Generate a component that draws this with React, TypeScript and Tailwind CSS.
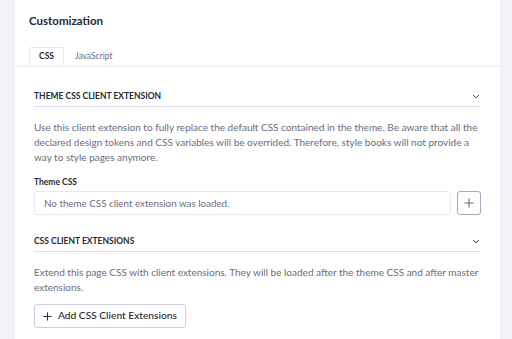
import React from "react";

const font = { fontFamily: "Lato, 'Noto Sans', sans-serif" };

const Chevron = () => (
    <svg width="8" height="5" viewBox="0 0 8 5" fill="none" className="mr-[1px]">
        <polyline points="1,1 4,3.8 7,1" stroke="#393a4a" strokeWidth="0.9" />
    </svg>
);

const Plus: React.FC<{ size: number; color: string }> = ({ size, color }) => (
    <svg width={size} height={size} viewBox="0 0 10 10" fill="none">
        <path d="M5 0.5v9M0.5 5h9" stroke={color} strokeWidth="1.1" />
    </svg>
);

const SectionHeader: React.FC<{ title: string; className?: string }> = ({ title, className }) => (
    <div className={`flex items-center justify-between border-b border-[#dedfe5] pb-[4px] ${className ?? ""}`}>
        <span className="text-[8.5px] font-bold leading-[12px] text-[#272833]">{title}</span>
        <Chevron />
    </div>
);

export default function App() {
    return (
        <div className="w-[512px] h-[339px] bg-[#f1f2f5] flex pl-[15px] pr-[12px] overflow-hidden" style={font}>
            <div className="flex-1 bg-white flex flex-col">
                <div className="px-[14px] pt-[14px] text-[11.5px] font-bold leading-[14px] text-[#272833]">
                    Customization
                </div>
                <div className="mt-[19px] flex px-[14px] border-b-2 border-[#f1f2f5]">
                    <div className="h-[18px] w-[35px] flex items-center justify-center border border-b-0 border-[#e7e7ed] rounded-t-[3px] text-[8.5px] font-bold text-[#272833] -mb-[2px] bg-white">
                        CSS
                    </div>
                    <div className="h-[18px] ml-[11px] flex items-center text-[8.5px] text-[#6b6c7e]">
                        JavaScript
                    </div>
                </div>
                <div className="px-[19px] flex flex-col">
                    <SectionHeader title="THEME CSS CLIENT EXTENSION" className="mt-[23px]" />
                    <p className="mt-[13px] text-[10px] leading-[15px] text-[#6b6c7e]">
                        Use this client extension to fully replace the default CSS contained in the theme. Be aware that all the declared design tokens and CSS variables will be overrided. Therefore, style books will not provide a way to style pages anymore.
                    </p>
                    <div className="mt-[11px] text-[8.5px] font-bold leading-[12px] text-[#272833]">Theme CSS</div>
                    <div className="mt-[3px] flex gap-[6px]">
                        <div className="flex-1 h-[24px] border border-[#e7e7ed] rounded-[3px] flex items-center pl-[9px] text-[9.8px] text-[#6b6c7e]">
                            No theme CSS client extension was loaded.
                        </div>
                        <button className="w-[24px] h-[24px] border border-[#a7a9bc] rounded-[3px] flex items-center justify-center">
                            <Plus size={10} color="#6b6c7e" />
                        </button>
                    </div>
                    <SectionHeader title="CSS CLIENT EXTENSIONS" className="mt-[20px]" />
                    <p className="mt-[13px] text-[10px] leading-[15px] text-[#6b6c7e]">
                        Extend this page CSS with client extensions. They will be loaded after the theme CSS and after master extensions.
                    </p>
                    <div className="mt-[9px] flex">
                        <button className="h-[24px] px-[8px] border border-[#cdced9] rounded-[3px] flex items-center gap-[6px] whitespace-nowrap text-[10.2px] text-[#272833] font-medium">
                            <Plus size={9} color="#272833" />
                            Add CSS Client Extensions
                        </button>
                    </div>
                </div>
            </div>
        </div>
    );
}
